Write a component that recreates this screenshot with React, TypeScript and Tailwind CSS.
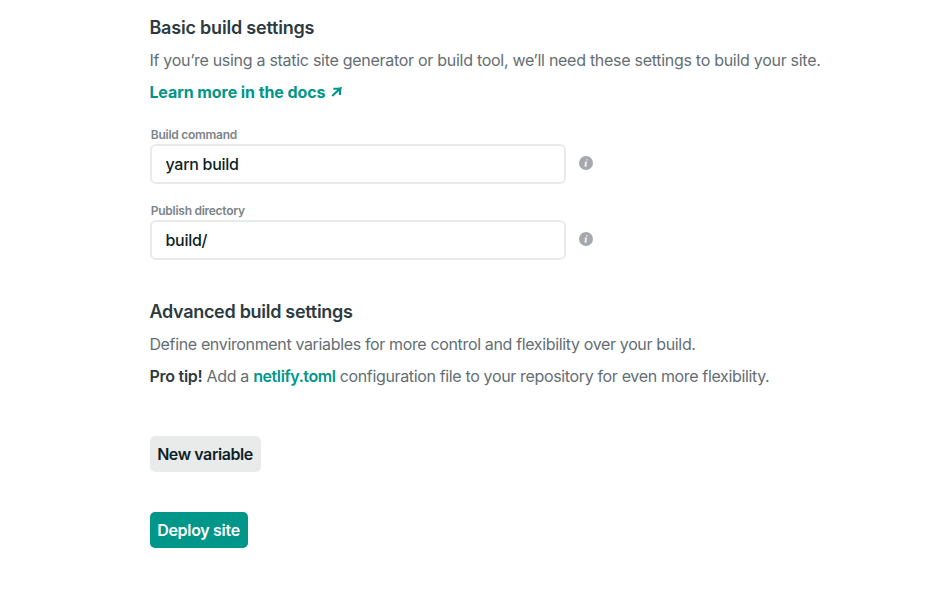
import React from 'react';

function InfoIcon() {
  return (
    <svg className="mb-[2px] ml-[13px] h-[14px] w-[14px] shrink-0" viewBox="0 0 14 14">
      <circle cx="7" cy="7" r="7" fill="#a3a9ac" />
      <path d="M7.2 3.2h1.4l-.3 1.4H6.9zM5.6 5.7h2.5l-.9 3.8h.8l-.2.9H5.3l1-3.9h-.9z" fill="#fff" fillOpacity=".9" />
    </svg>
  );
}

function Field({ label, value }: { label: string; value: string }) {
  return (
    <div>
      <label className="block h-[17px] pl-[0.8px] text-[12px] leading-[18px] font-semibold tracking-[-0.27px] text-[#7b8488]">
        {label}
      </label>
      <div className="mt-px flex items-center">
        <input
          className="h-10 w-[416px] rounded-[6px] border-2 border-[#e9ebeb] bg-white px-[13.5px] text-base font-medium tracking-[-0.28px] text-[#0e1e25] outline-none"
          defaultValue={value}
        />
        <InfoIcon />
      </div>
    </div>
  );
}

export default function App() {
  return (
    <main className="flex h-[603px] flex-col items-start bg-white pt-[15px] pl-[150px] font-['Inter',sans-serif] text-base leading-6 whitespace-nowrap text-[#646e73]">
      <h2 className="-ml-[0.6px] text-lg leading-[25px] font-semibold tracking-[-0.2px] text-[#2d3b41]">Basic build settings</h2>
      <p className="mt-2 -ml-[0.6px] tracking-[-0.284px]">If you’re using a static site generator or build tool, we’ll need these settings to build your site.</p>
      <a className="mt-2 -ml-[0.6px] flex items-center font-bold tracking-[-0.08px] text-[#00968a]">
        Learn more in the docs
        <svg className="ml-[6px] h-[10px] w-[11px]" viewBox="0 0 11 10" fill="none" stroke="currentColor" strokeWidth="2.1">
          <path d="M2.3 1.7Q6 2 9.6 1.2Q8.7 4.5 9.1 8M9.4 1.3 1.2 9" />
        </svg>
      </a>
      <div className="mt-[22px] flex flex-col gap-[18px]">
        <Field label="Build command" value="yarn build" />
        <Field label="Publish directory" value="build/" />
      </div>
      <h2 className="mt-[39px] -ml-[0.6px] text-lg leading-[25px] font-semibold tracking-[-0.29px] text-[#2d3b41]">Advanced build settings</h2>
      <p className="mt-2 -ml-[0.6px] tracking-[-0.352px]">Define environment variables for more control and flexibility over your build.</p>
      <p className="mt-2 -ml-[0.6px] tracking-[-0.35px]"><strong className="font-semibold tracking-[-0.25px] text-[#2d3b41]">Pro tip!</strong> Add a <a className="font-semibold tracking-[-0.4px] text-[#00968a]">netlify.toml</a> configuration file to your repository for even more flexibility.</p>
      <button className="mt-12 h-9 w-[111px] rounded-[5px] bg-[#e9ebeb] pr-px font-semibold tracking-[-0.42px] text-[#0e1e25]">New variable</button>
      <button className="mt-10 h-9 w-[98px] rounded-[5px] bg-[#00968a] pr-px font-semibold tracking-[-0.3px] text-white">Deploy site</button>
    </main>
  );
}
